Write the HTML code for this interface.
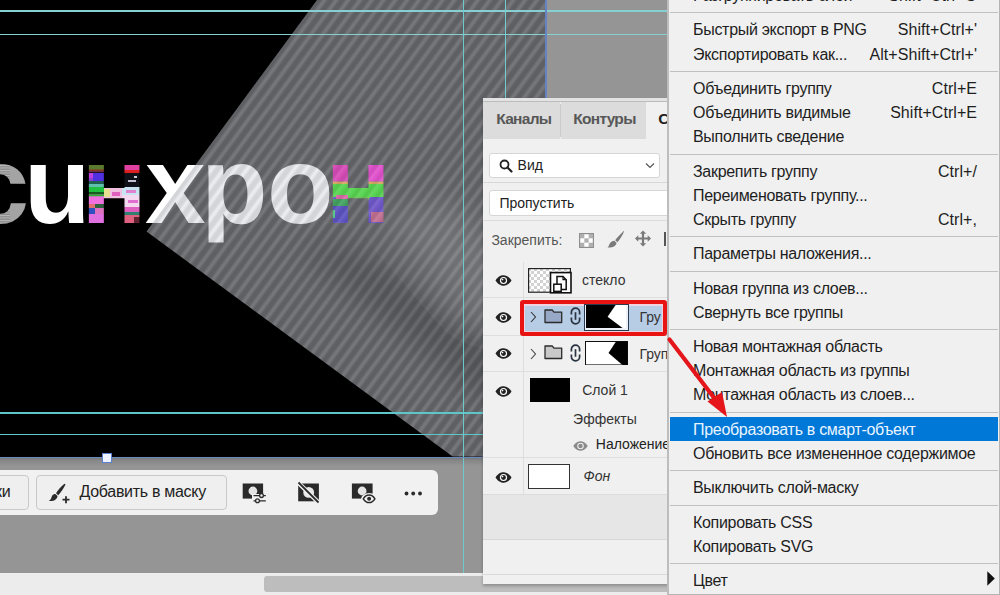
<!DOCTYPE html>
<html><head><meta charset="utf-8">
<style>
*{margin:0;padding:0;box-sizing:border-box}
html,body{width:1000px;height:595px;overflow:hidden;background:#959595;font-family:"Liberation Sans",sans-serif;position:relative}
.abs{position:absolute}
.g{position:absolute;background:#86d0d2}
/* menu */
#menu{position:absolute;left:667px;top:-16.9px;width:333px;height:611.5px;overflow:hidden;background:#f0f0f0;border-left:2px solid #bdbdbd;box-shadow:inset -1px 0 0 #b4b4b4, inset 0 -1px 0 #b4b4b4}
#menu .it{position:relative;height:24.16px;line-height:26.2px;font-size:16px;letter-spacing:-0.3px;color:#1e1e1e;padding-left:24px;white-space:nowrap}
#menu .it .k{position:absolute;right:23px;top:0;letter-spacing:0.05px}
#menu .sep{position:relative;height:10.2px}
#menu .sep:after{content:"";position:absolute;left:1px;right:2px;top:5.1px;height:1px;background:#c0c0c0}
#menu .hl{background:#0078d7;color:#eaf4ff;margin-right:2px;margin-left:1px;padding-left:23px}
/* panel */
#panel{position:absolute;left:483px;top:98px;width:185px;height:486px;background:#f0f0f0;box-shadow:0 2px 3px rgba(0,0,0,.25)}
</style></head><body>

<!-- canvas -->
<svg class="abs" style="left:0;top:0" width="546" height="457" viewBox="0 0 546 457">
<defs>
<linearGradient id="sg" x1="0" x2="1" y1="0" y2="0">
<stop offset="0" stop-color="rgb(176,178,185)" stop-opacity="0.54"/>
<stop offset="0.15" stop-color="rgb(174,176,183)" stop-opacity="0.54"/>
<stop offset="0.5" stop-color="rgb(228,229,236)" stop-opacity="0.54"/>
<stop offset="0.85" stop-color="rgb(174,176,183)" stop-opacity="0.54"/>
<stop offset="1" stop-color="rgb(176,178,185)" stop-opacity="0.54"/>
</linearGradient>
<pattern id="st" patternUnits="userSpaceOnUse" width="9.5" height="40" patternTransform="rotate(36.4)">
<rect x="0" width="9.5" height="40" fill="url(#sg)"/>
</pattern>
<pattern id="st2" patternUnits="userSpaceOnUse" width="9.5" height="40" patternTransform="rotate(36.4)">
<rect x="0" width="4" height="40" fill="rgba(0,0,0,0.06)"/>
<rect x="4" width="3" height="40" fill="rgba(255,255,255,0.08)"/>
</pattern>
<pattern id="scan" patternUnits="userSpaceOnUse" width="40" height="2.5">
<rect width="40" height="2.5" fill="#8c8c8c"/>
<rect width="40" height="1" fill="#b8b8b8"/>
<rect x="10" width="15" height="2.5" fill="#a4a4a4"/>
</pattern>
<clipPath id="polyc"><polygon points="317,0 146.5,231.5 452.6,456.6 700,457 700,0"/></clipPath>
<filter id="bl" x="-50%" y="-50%" width="200%" height="200%"><feGaussianBlur stdDeviation="14"/></filter>
<clipPath id="pc"><rect x="190" y="100" width="100" height="142.6"/></clipPath>
<clipPath id="n1"><text x="81.3" y="223.3" font-family="Liberation Sans" font-weight="bold" font-size="109">н</text></clipPath>
<clipPath id="n2"><text x="325.3" y="223.3" font-family="Liberation Sans" font-weight="bold" font-size="109">н</text></clipPath>
</defs>
<rect width="546" height="457" fill="#000"/>
<g font-family="Liberation Sans" font-weight="bold" font-size="109">
<text x="-31.5" y="223.3" fill="url(#scan)">c</text>
<text x="24" y="223.3" fill="#fff">u</text>
<text x="145" y="223.3" fill="#fff">x</text>
<text x="201" y="223.3" fill="#fff" clip-path="url(#pc)">p</text>
<text x="267" y="223.3" fill="#fff">o</text>
</g>
<g clip-path="url(#n1)">
<rect x="85" y="160" width="60" height="70" fill="#e070e0"/>
<rect x="85" y="165" width="22" height="5" fill="#5a7a30"/>
<rect x="85" y="169.5" width="22" height="2" fill="#8a3020"/>
<rect x="85" y="171.5" width="22" height="1.5" fill="#201020"/>
<rect x="85" y="173" width="8" height="5" fill="#c040e0"/>
<rect x="93" y="173" width="14" height="8" fill="#5030e0"/>
<rect x="85" y="178" width="8" height="3" fill="#9040d0"/>
<rect x="85" y="181" width="22" height="3" fill="#206050"/>
<rect x="85" y="184" width="22" height="3" fill="#60c0b0"/>
<rect x="85" y="187" width="22" height="5" fill="#20c040"/>
<rect x="85" y="192" width="22" height="2.5" fill="#185a20"/>
<rect x="85" y="194.5" width="22" height="2" fill="#30b030"/>
<rect x="85" y="196.5" width="22" height="7.5" fill="#f070e0"/>
<rect x="85" y="204" width="10" height="4" fill="#e07070"/>
<rect x="95" y="204" width="12" height="4" fill="#306040"/>
<rect x="85" y="208" width="10" height="6" fill="#3050c0"/>
<rect x="95" y="208" width="12" height="6" fill="#e070c0"/>
<rect x="85" y="214" width="22" height="9" fill="#e070e0"/>
<rect x="104" y="187" width="22" height="13" fill="#f0c0e0"/>
<rect x="104" y="189" width="6" height="8" fill="#e8e090"/>
<rect x="112" y="192" width="8" height="4" fill="#e060c0"/>
<rect x="122" y="165" width="22" height="5" fill="#e040a0"/>
<rect x="122" y="170" width="22" height="3" fill="#e02020"/>
<rect x="122" y="173" width="22" height="14" fill="#101018"/>
<rect x="134" y="176" width="3" height="2" fill="#d0d0d0"/>
<rect x="128" y="180" width="8" height="2" fill="#c0c0d0"/>
<rect x="122" y="187" width="22" height="8" fill="#c8e4f0"/>
<rect x="126" y="190" width="10" height="3" fill="#e080d0"/>
<rect x="122" y="195" width="22" height="12" fill="#f4d8f0"/>
<rect x="128" y="200" width="10" height="3" fill="#e070d0"/>
<rect x="122" y="207" width="22" height="5" fill="#e060c0"/>
<rect x="122" y="212" width="22" height="3" fill="#308070"/>
<rect x="122" y="215" width="22" height="8" fill="#e06080"/>
<rect x="134" y="217" width="10" height="6" fill="#602030"/>
</g>
<polygon points="317,0 146.5,231.5 452.6,456.6 700,457 700,0" fill="url(#st)"/>
<g clip-path="url(#polyc)">
<g filter="url(#bl)">
<polygon points="380,215 450,200 546,290 546,330 470,320" fill="rgba(255,255,255,0.10)"/>
<polygon points="300,250 340,245 546,360 546,410 470,390" fill="rgba(0,0,0,0.14)"/>
</g>
</g>

<g clip-path="url(#n2)">
<rect x="328" y="160" width="60" height="70" fill="#6a58c4"/>
<rect x="328" y="165" width="22" height="16.5" fill="#d64cb6"/>
<rect x="365" y="165" width="22" height="16.5" fill="#e052cc"/>
<rect x="328" y="181.5" width="60" height="2.5" fill="#d4a862"/>
<rect x="328" y="184" width="60" height="13" fill="#58d452"/>
<rect x="336" y="195" width="12" height="4" fill="#d86aa8"/>
<rect x="328" y="199" width="20" height="7" fill="#44a262"/>
<rect x="328" y="206" width="20" height="16" fill="#5c54c0"/>
<rect x="330" y="210" width="5" height="8" fill="#50c080"/>
<rect x="348" y="197" width="22" height="3" fill="#70c058"/>
<rect x="369" y="198" width="18" height="24" fill="#7058c8"/>
<rect x="371" y="212" width="16" height="10" fill="#c07090"/>
<rect x="328" y="160" width="60" height="70" fill="url(#st2)"/>
</g>
</svg>

<div class="abs" style="left:0;top:457px;width:546px;height:14px;background:linear-gradient(#6a707c 0px,#858585 3px,#959595 9px)"></div>
<!-- pasteboard top-right guides -->
<div class="g" style="left:0;top:10.3px;width:668px;height:1.6px"></div>
<div class="g" style="left:0;top:33.8px;width:668px;height:1.6px"></div>
<div class="g" style="left:0;top:412px;width:483px;height:1.6px;background:#5ec6c8"></div>
<div class="g" style="left:0;top:433.8px;width:483px;height:1.6px;background:#5ec6c8"></div>
<div class="g" style="left:462.7px;top:0;width:1.6px;height:573px;background:#6ccacc"></div>
<div class="g" style="left:505px;top:0;width:1.4px;height:98px;background:#72cdd0"></div>
<!-- canvas bounds -->
<div class="abs" style="left:545.2px;top:0;width:2px;height:457px;background:#6684c4"></div>
<div class="abs" style="left:0;top:456.5px;width:547px;height:1.5px;background:#6a88b8"></div>

<!-- bottom scrollbar -->
<div class="abs" style="left:0;top:573px;width:668px;height:22px;background:#ececec"></div>
<div class="abs" style="left:264px;top:576px;width:404px;height:15.5px;background:#bdbdbd;border-radius:3px 0 0 3px"></div>

<!-- toolbar -->
<div class="abs" style="left:102px;top:452.5px;width:10px;height:10px;background:#eef3ff;border:1px solid #5a7fd0"></div>
<div class="abs" style="left:-10px;top:469.6px;width:448px;height:45.8px;background:#f1f1f1;border-radius:6px"></div>
<div class="abs" style="left:-10px;top:475px;width:38.8px;height:35px;background:#efefef;border:1.3px solid #c9c9c9;border-radius:4px"></div>
<div class="abs" style="left:-5px;top:483px;font:16px 'Liberation Sans',sans-serif;letter-spacing:-0.3px;color:#222;white-space:nowrap">ки</div>
<div class="abs" style="left:36px;top:475px;width:190.8px;height:35px;background:#efefef;border:1.3px solid #c9c9c9;border-radius:4px"></div>
<svg class="abs" style="left:236px;top:476px" width="200" height="32" viewBox="236 476 200 32">
<defs><mask id="m3"><rect x="236" y="476" width="200" height="32" fill="#fff"/><rect x="252" y="494" width="20" height="12" fill="#000"/></mask>
<mask id="m5"><rect x="236" y="476" width="200" height="32" fill="#fff"/><ellipse cx="369.1" cy="498.8" rx="8" ry="5.8" fill="#000"/></mask></defs>
<rect x="242.7" y="483.5" width="20.4" height="15.1" fill="#2a2a2a" mask="url(#m3)"/>
<circle cx="252.9" cy="491" r="4.4" fill="#e4e4e4" mask="url(#m3)"/>
<path d="M253.5 495.6 H265.8 M253.5 500.8 H265.8" stroke="#2a2a2a" stroke-width="1.3"/>
<circle cx="261.5" cy="495.6" r="1.9" fill="#f1f1f1" stroke="#2a2a2a" stroke-width="1.3"/>
<circle cx="257.5" cy="500.8" r="1.9" fill="#f1f1f1" stroke="#2a2a2a" stroke-width="1.3"/>
<rect x="298.2" y="483.5" width="20.7" height="17.8" fill="#2a2a2a"/>
<circle cx="308.7" cy="492.4" r="5.4" fill="#e8e8e8"/>
<path d="M297.5 482 L319 503" stroke="#f1f1f1" stroke-width="4.4"/>
<path d="M298.5 482.5 L318.5 502.5" stroke="#2a2a2a" stroke-width="1.8"/>
<rect x="351.9" y="483.5" width="20.7" height="15.1" fill="#2a2a2a" mask="url(#m5)"/>
<circle cx="362.1" cy="491" r="4.4" fill="#e4e4e4" mask="url(#m5)"/>
<path d="M363.3 498.8 C365 496 367 495 369.1 495 C371.2 495 373.2 496 374.9 498.8 C373.2 501.6 371.2 502.6 369.1 502.6 C367 502.6 365 501.6 363.3 498.8Z" fill="none" stroke="#2a2a2a" stroke-width="1.5"/>
<circle cx="369.1" cy="498.8" r="2" fill="#2a2a2a"/>
<circle cx="406.5" cy="493.5" r="1.9" fill="#2a2a2a"/><circle cx="413.2" cy="493.5" r="1.9" fill="#2a2a2a"/><circle cx="420" cy="493.5" r="1.9" fill="#2a2a2a"/>
</svg>
<svg class="abs" style="left:48px;top:482.5px" width="25" height="21" viewBox="0 0 25 21"><path d="M16.5 0.8 C13 3.6 9.5 7.5 8 10.3 L10.3 12.2 C12.6 10 15.5 5.8 17.5 1.6Z" fill="#2a2a2a"/><path d="M7.3 11 C4.6 11 3.8 13.3 3.3 15 C2.8 16.6 1.8 17.4 0.6 17.8 C4.2 18.8 8.8 17.4 9.6 13Z" fill="#2a2a2a"/><path d="M18 13.2 V20.2 M14.5 16.7 H21.5" stroke="#2a2a2a" stroke-width="1.8"/></svg>
<div class="abs" style="left:79.5px;top:483px;font:16px 'Liberation Sans',sans-serif;letter-spacing:-0.3px;color:#222;white-space:nowrap">Добавить в маску</div>
<!-- layers panel -->
<div id="panel">
 <div class="abs" style="left:0;top:0;width:185px;height:3px;background:#e3e3e3"></div>
 <div class="abs" style="left:0;top:3px;width:185px;height:1px;background:#bdbdbd"></div>
 <div class="abs" style="left:0;top:4px;width:77px;height:37.4px;background:#dcdcdc"></div>
 <div class="abs" style="left:77px;top:6px;width:1px;height:33px;background:#cacaca"></div>
 <div class="abs" style="left:78px;top:4px;width:85px;height:37.4px;background:#dcdcdc"></div>
 <div class="abs" style="left:13.2px;top:12px;font:bold 15.5px 'Liberation Sans',sans-serif;letter-spacing:-0.7px;color:#575757;white-space:nowrap">Каналы</div>
 <div class="abs" style="left:90.2px;top:12px;font:bold 15.5px 'Liberation Sans',sans-serif;letter-spacing:-0.7px;color:#575757;white-space:nowrap">Контуры</div>
 <div class="abs" style="left:175.2px;top:12px;font:bold 15.5px 'Liberation Sans',sans-serif;letter-spacing:-0.7px;color:#1e1e1e;white-space:nowrap">Слои</div>
 <!-- search -->
 <div class="abs" style="left:5.8px;top:54.7px;width:171px;height:25.8px;background:#fff;border:1px solid #d6d6d6;border-radius:3px"></div>
 <svg class="abs" style="left:16px;top:61px" width="14" height="14" viewBox="0 0 14 14"><circle cx="5.5" cy="5.5" r="4" fill="none" stroke="#222" stroke-width="1.8"/><line x1="8.5" y1="8.5" x2="12.5" y2="12.5" stroke="#222" stroke-width="2.2" stroke-linecap="round"/></svg>
 <div class="abs" style="left:34.6px;top:59px;font:14px 'Liberation Sans',sans-serif;color:#222;white-space:nowrap">Вид</div>
 <svg class="abs" style="left:162px;top:64px" width="10" height="7" viewBox="0 0 10 7"><path d="M1 1.5 L5 5.5 L9 1.5" fill="none" stroke="#555" stroke-width="1.2"/></svg>
 <div class="abs" style="left:0;top:84px;width:185px;height:1px;background:#d8d8d8"></div>
 <!-- mode -->
 <div class="abs" style="left:5.8px;top:91.8px;width:190px;height:26.4px;background:#fff;border:1px solid #d6d6d6;border-radius:3px"></div>
 <div class="abs" style="left:16.4px;top:97px;font:14px 'Liberation Sans',sans-serif;color:#222;white-space:nowrap">Пропустить</div>
 <div class="abs" style="left:0;top:122px;width:185px;height:1px;background:#dcdcdc"></div>
 <!-- lock row -->
 <div class="abs" style="left:8.4px;top:134px;font:14px 'Liberation Sans',sans-serif;color:#555;white-space:nowrap">Закрепить:</div>
 <svg class="abs" style="left:96px;top:134.5px" width="15" height="15" viewBox="0 0 15 15"><rect x="0.6" y="0.6" width="13.8" height="13.8" fill="#fff" stroke="#8e8e8e" stroke-width="1.2"/><rect x="1" y="1" width="4.3" height="4.3" fill="#b0b0b0"/><rect x="9.7" y="1" width="4.3" height="4.3" fill="#b0b0b0"/><rect x="5.35" y="5.35" width="4.3" height="4.3" fill="#b0b0b0"/><rect x="1" y="9.7" width="4.3" height="4.3" fill="#b0b0b0"/><rect x="9.7" y="9.7" width="4.3" height="4.3" fill="#b0b0b0"/></svg>
 <svg class="abs" style="left:124px;top:131.5px" width="18" height="18" viewBox="0 0 18 18"><path d="M17.2 0.8 C14.5 2.8 10.5 7.5 8.2 10.2 L10.4 12.2 C13 9.2 16.2 4.5 17.2 0.8Z" fill="#7a7a7a"/><path d="M7.3 10.8 C4.2 11 2.8 13 2.2 14.8 C1.7 16.2 1.2 17 0.6 17.4 C4.5 17.8 9 16.6 9.6 13Z" fill="#7a7a7a"/></svg>
 <svg class="abs" style="left:151px;top:132px" width="18" height="17" viewBox="0 0 18 17"><path d="M9 0.5 L12.2 3.8 H10.1 V7.4 H13.7 V5.3 L17 8.5 L13.7 11.7 V9.6 H10.1 V13.2 H12.2 L9 16.5 L5.8 13.2 H7.9 V9.6 H4.3 V11.7 L1 8.5 L4.3 5.3 V7.4 H7.9 V3.8 H5.8Z" fill="#7a7a7a"/></svg>
 <div class="abs" style="left:181px;top:133.5px;width:2px;height:14px;background:#555"></div>
 <!-- rows -->
 <div class="abs" style="left:39.8px;top:163.7px;width:1px;height:232px;background:#dedede"></div>
 <div class="abs" style="left:0;top:199.2px;width:185px;height:1px;background:#dedede"></div>
 <div class="abs" style="left:0;top:236.8px;width:185px;height:1px;background:#dedede"></div>
 <div class="abs" style="left:0;top:272.8px;width:185px;height:1px;background:#dedede"></div>
 <div class="abs" style="left:0;top:358.9px;width:185px;height:1px;background:#dedede"></div>
 <div class="abs" style="left:0;top:396.3px;width:185px;height:46.2px;background:#e6e6e6;border-top:1px solid #dcdcdc;border-bottom:1px solid #d6d6d6"></div>
 <div class="abs" style="left:0;top:475.5px;width:185px;height:1px;background:#d9d9d9"></div>
 <div class="abs" style="left:39.8px;top:359px;width:1px;height:37px;background:#dedede"></div>
 <!-- eyes -->
 <svg class="abs eye" style="left:11.9px;top:177px" width="17" height="11" viewBox="0 0 17 11"><use href="#eyeg"/></svg>
 <svg class="abs eye" style="left:11.9px;top:214px" width="17" height="11" viewBox="0 0 17 11"><use href="#eyeg"/></svg>
 <svg class="abs eye" style="left:11.9px;top:250px" width="17" height="11" viewBox="0 0 17 11"><use href="#eyeg"/></svg>
 <svg class="abs eye" style="left:11.9px;top:287.5px" width="17" height="11" viewBox="0 0 17 11"><use href="#eyeg"/></svg>
 <svg class="abs eye" style="left:11.9px;top:373.5px" width="17" height="11" viewBox="0 0 17 11"><use href="#eyeg"/></svg>
 <!-- row1 glass -->
 <svg class="abs" style="left:45px;top:169.8px" width="44" height="26" viewBox="0 0 44 26">
  <defs><pattern id="chk" patternUnits="userSpaceOnUse" width="6" height="6"><rect width="6" height="6" fill="#fff"/><rect width="3" height="3" fill="#d2d2d2"/><rect x="3" y="3" width="3" height="3" fill="#d2d2d2"/></pattern></defs>
  <rect x="0.6" y="0.6" width="41.8" height="23.6" fill="url(#chk)" stroke="#222" stroke-width="1.2"/>
  <rect x="22.5" y="4.6" width="20.5" height="20.2" fill="#fff" stroke="#111" stroke-width="1.6"/>
  <path d="M29 8.5 H35 L38.2 11.7 V21.4 H29Z" fill="#fff" stroke="#111" stroke-width="1.5"/>
  <path d="M35 8.5 V11.7 H38.2" fill="none" stroke="#111" stroke-width="1.2"/>
  <rect x="25.8" y="16.2" width="7.4" height="7.2" fill="#fff" stroke="#111" stroke-width="1.5"/>
 </svg>
 <div class="abs" style="left:99px;top:174px;font:14px 'Liberation Sans',sans-serif;color:#333;white-space:nowrap">стекло</div>
 <!-- row2 selected -->
 <div class="abs" style="left:36.5px;top:202.4px;width:147px;height:35.2px;border:4.3px solid #e81414;border-radius:3px;background:#efd4e0"></div>
 <div class="abs" style="left:41.6px;top:207.6px;width:137px;height:25.2px;background:#b7cce5"></div>
 <svg class="abs" style="left:46.5px;top:213px" width="7" height="12" viewBox="0 0 7 12"><path d="M1 1 L5.5 6 L1 11" fill="none" stroke="#333" stroke-width="1.1"/></svg>
 <svg class="abs" style="left:60.5px;top:210.5px" width="20" height="15" viewBox="0 0 20 15"><path d="M1 1 H8.2 L10 3.2 H17.7 V13.5 H1Z" fill="#97a9c6" stroke="#2b2b2b" stroke-width="1.3" stroke-linejoin="round"/></svg>
 <svg class="abs" style="left:87.4px;top:307.6px;top:209.4px" width="11" height="18" viewBox="0 0 11 18"><use href="#linkg"/></svg>
 <div class="abs" style="left:100.6px;top:206px;width:45.6px;height:27.3px;border:1px solid #2a3a50;background:#eef2f8"></div>
 <svg class="abs" style="left:103px;top:207.2px" width="40" height="23.2" viewBox="0 0 40 23.2"><rect width="40" height="23.2" fill="#000"/><polygon points="29.6,0 40,0 40,23.2 36.8,23.2 21.6,11.7" fill="#fff"/></svg>
 <div class="abs" style="left:156.4px;top:211px;width:22px;overflow:hidden;font:14px 'Liberation Sans',sans-serif;color:#333;white-space:nowrap">Группа</div>
 <!-- row3 -->
 <svg class="abs" style="left:46.5px;top:249.5px" width="7" height="12" viewBox="0 0 7 12"><path d="M1 1 L5.5 6 L1 11" fill="none" stroke="#444" stroke-width="1.1"/></svg>
 <svg class="abs" style="left:60.5px;top:246.5px" width="20" height="15" viewBox="0 0 20 15"><path d="M1 1 H8.2 L10 3.2 H17.7 V13.5 H1Z" fill="#c9c9c9" stroke="#2b2b2b" stroke-width="1.3" stroke-linejoin="round"/></svg>
 <svg class="abs" style="left:87px;top:245.5px" width="11" height="18" viewBox="0 0 11 18"><use href="#linkg"/></svg>
 <svg class="abs" style="left:102px;top:243px" width="43" height="24.4" viewBox="0 0 43 24.4"><rect x="0.5" y="0.5" width="42" height="23.4" fill="#fff" stroke="#111"/><polygon points="31,0.5 42.5,0.5 42.5,24 37.5,24 23.5,12" fill="#000"/></svg>
 <div class="abs" style="left:156.4px;top:248px;font:14px 'Liberation Sans',sans-serif;color:#333;white-space:nowrap">Группа</div>
 <!-- row4 layer 1 -->
 <div class="abs" style="left:45px;top:280px;width:42px;height:23.8px;background:#000;border-left:2px solid #f0f0f0;box-shadow:inset 1px 0 0 #000"></div>
 <div class="abs" style="left:99.2px;top:284px;font:14px 'Liberation Sans',sans-serif;color:#333;white-space:nowrap">Слой 1</div>
 <div class="abs" style="left:90.1px;top:312.5px;font:14px 'Liberation Sans',sans-serif;color:#333;white-space:nowrap">Эффекты</div>
 <svg class="abs" style="left:88.5px;top:343px" width="17" height="10" viewBox="0 0 17 11"><use href="#eyeg2"/></svg>
 <div class="abs" style="left:112.8px;top:338px;font:14px 'Liberation Sans',sans-serif;color:#222;white-space:nowrap">Наложение</div>
 <!-- row5 bg -->
 <div class="abs" style="left:45px;top:366.2px;width:42px;height:24.5px;background:#fff;border:1px solid #333"></div>
 <div class="abs" style="left:100.6px;top:370px;font:italic 14px 'Liberation Sans',sans-serif;color:#333;white-space:nowrap">Фон</div>
</div>
<svg width="0" height="0" style="position:absolute">
 <defs>
  <g id="eyeg"><path d="M0.5 5.5 C3 1.5 6 0.3 8.5 0.3 C11 0.3 14 1.5 16.5 5.5 C14 9.5 11 10.7 8.5 10.7 C6 10.7 3 9.5 0.5 5.5Z" fill="#222"/><circle cx="8.5" cy="5.5" r="3.6" fill="#fff"/><circle cx="8.5" cy="5.5" r="2.4" fill="#222"/><circle cx="7.6" cy="4.6" r="0.8" fill="#fff"/></g>
  <g id="eyeg2"><path d="M0.5 5.5 C3 1.5 6 0.3 8.5 0.3 C11 0.3 14 1.5 16.5 5.5 C14 9.5 11 10.7 8.5 10.7 C6 10.7 3 9.5 0.5 5.5Z" fill="#8a8a8a"/><circle cx="8.5" cy="5.5" r="3.6" fill="#f0f0f0"/><circle cx="8.5" cy="5.5" r="2.4" fill="#8a8a8a"/></g>
  <g id="linkg"><path d="M1.4 7.6 V5.2 A4.1 4.1 0 0 1 9.6 5.2 V7.6 M1.4 10.4 V12.8 A4.1 4.1 0 0 0 9.6 12.8 V10.4" fill="none" stroke="#2a3340" stroke-width="1.7"/><line x1="5.5" y1="5.2" x2="5.5" y2="12.8" stroke="#2a3340" stroke-width="1.7"/></g>
 </defs>
</svg>



<!-- context menu -->
<div id="menu">
<div class="it">Разгруппировать слои<span class="k">Shift+Ctrl+G</span></div>
<div class="sep"></div>
<div class="it">Быстрый экспорт в PNG<span class="k">Shift+Ctrl+'</span></div>
<div class="it">Экспортировать как...<span class="k">Alt+Shift+Ctrl+'</span></div>
<div class="sep"></div>
<div class="it">Объединить группу<span class="k">Ctrl+E</span></div>
<div class="it">Объединить видимые<span class="k">Shift+Ctrl+E</span></div>
<div class="it">Выполнить сведение</div>
<div class="sep"></div>
<div class="it">Закрепить группу<span class="k">Ctrl+/</span></div>
<div class="it">Переименовать группу...</div>
<div class="it">Скрыть группу<span class="k">Ctrl+,</span></div>
<div class="sep"></div>
<div class="it">Параметры наложения...</div>
<div class="sep"></div>
<div class="it">Новая группа из слоев...</div>
<div class="it">Свернуть все группы</div>
<div class="sep"></div>
<div class="it">Новая монтажная область</div>
<div class="it">Монтажная область из группы</div>
<div class="it">Монтажная область из слоев...</div>
<div class="sep"></div>
<div class="it hl">Преобразовать в смарт-объект</div>
<div class="it">Обновить все измененное содержимое</div>
<div class="sep"></div>
<div class="it">Выключить слой-маску</div>
<div class="sep"></div>
<div class="it">Копировать CSS</div>
<div class="it">Копировать SVG</div>
<div class="sep"></div>
<div class="it">Цвет<svg style="position:absolute;right:5.5px;top:3px" width="8" height="15" viewBox="0 0 8 15"><path d="M0.3 0.3 L7.8 7.5 L0.3 14.7Z" fill="#111"/></svg></div>
</div>

<!-- red arrow -->
<svg class="abs" style="left:660px;top:330px;z-index:5" width="80" height="95" viewBox="0 0 80 95">
<line x1="9.5" y1="9.5" x2="55" y2="69" stroke="#e4161b" stroke-width="4.2" stroke-linecap="round"/>
<polygon points="67,87 47.5,71.5 62,62" fill="#e4161b"/>
</svg>
</body></html>
